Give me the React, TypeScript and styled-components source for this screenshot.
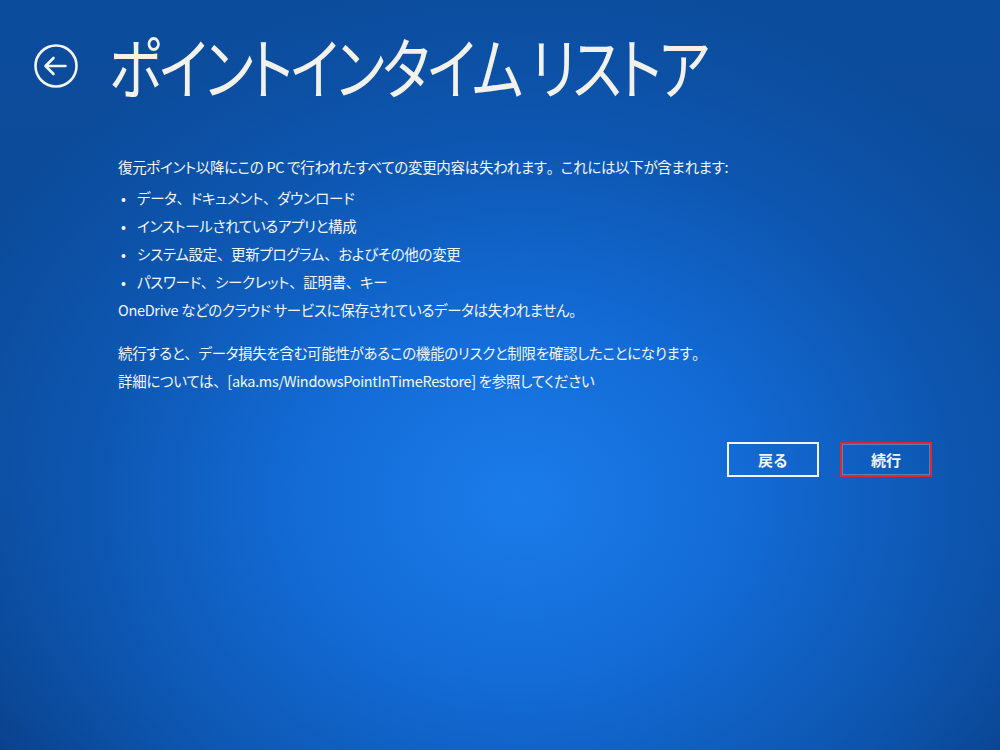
import styled, { createGlobalStyle } from "styled-components";

const GlobalStyle = createGlobalStyle`
  html, body {
    margin: 0;
    padding: 0;
    background: #0a4590;
  }
`;

const Screen = styled.div`
  width: 1000px;
  height: 750px;
  overflow: hidden;
  box-sizing: border-box;
  color: #f4f6f8;
  font-family: "Noto Sans CJK JP", "Noto Sans", sans-serif;
  background:
    radial-gradient(ellipse 620px 520px at 520px 500px, #1b7ce9 0%, #136bd6 35%, #0d56b0 70%, rgba(10, 64, 138, 0) 100%),
    linear-gradient(180deg, #0c4c9c 0%, #0b4a98 60%, #0a3f88 100%);
  padding: 31px 0 0 33px;
`;

const Header = styled.header`
  display: flex;
  align-items: center;
  gap: 30px;
`;

const BackIcon = styled.svg`
  width: 46px;
  height: 46px;
  flex: none;
  margin-top: 3px;
`;

const Title = styled.h1`
  margin: 0;
  font-size: 67px;
  font-weight: 400;
  line-height: 67px;
  letter-spacing: -3px;
  font-feature-settings: "palt";
  color: #f2f1ea;
  white-space: nowrap;
  transform: scaleX(0.815);
  transform-origin: left center;
`;

const Content = styled.main`
  margin: 55px 0 0 85px;
  width: 820px;
  font-size: 14.5px;
  line-height: 28px;
  font-feature-settings: "palt";
  letter-spacing: -0.32px;
`;

// full-width punctuation keeps its trailing space, as in the original UI font
const Punct = styled.span`
  font-feature-settings: normal;
`;

const Line = styled.p<{ $gap?: number }>`
  margin: ${(p) => p.$gap ?? 0}px 0 0;
`;

const Bullets = styled.ul`
  list-style: none;
  margin: 3px 0 0;
  padding: 0;
`;

const Bullet = styled.li`
  padding-left: 3px;

  &::before {
    content: "•";
    display: inline-block;
    width: 16px;
  }
`;

const ButtonRow = styled.div`
  display: flex;
  justify-content: flex-end;
  gap: 21px;
  width: 814px;
  margin-top: 47px;
`;

const Button = styled.button<{ $focused?: boolean }>`
  width: 92px;
  height: 35px;
  box-sizing: border-box;
  background: transparent;
  color: #f4f6f8;
  font-family: "Noto Sans CJK JP", sans-serif;
  font-size: 15px;
  font-weight: 700;
  border: 2px solid ${(p) => (p.$focused ? "#e0262e" : "#f2f4f6")};
  outline: ${(p) => (p.$focused ? "1px solid rgba(150, 170, 200, 0.5)" : "none")};
  outline-offset: -3px;
  padding: 0;
`;

const jp = (text: string) =>
  text.split(/([、。])/).map((part, i) => (i % 2 ? <Punct key={i}>{part}</Punct> : part));

const items = [
  "データ、ドキュメント、ダウンロード",
  "インストールされているアプリと構成",
  "システム設定、更新プログラム、およびその他の変更",
  "パスワード、シークレット、証明書、キー",
];

export default function App() {
  return (
    <Screen>
      <GlobalStyle />
      <Header>
        <BackIcon viewBox="0 0 46 46" fill="none" stroke="#f4f4f0" strokeWidth="2.6">
          <circle cx="23" cy="23" r="20.5" />
          <path d="M12.5 23h20M20.5 15l-8 8 8 8" strokeLinecap="round" strokeLinejoin="round" />
        </BackIcon>
        <Title>ポイントインタイム リストア</Title>
      </Header>
      <Content>
        <Line>
          {jp("復元ポイント以降にこの PC で行われたすべての変更内容は失われます。これには以下が含まれます:")}
        </Line>
        <Bullets>
          {items.map((item) => (
            <Bullet key={item}>{jp(item)}</Bullet>
          ))}
        </Bullets>
        <Line>{jp("OneDrive などのクラウド サービスに保存されているデータは失われません。")}</Line>
        <Line $gap={15}>
          {jp("続行すると、データ損失を含む可能性があるこの機能のリスクと制限を確認したことになります。")}
        </Line>
        <Line>{jp("詳細については、[aka.ms/WindowsPointInTimeRestore] を参照してください")}</Line>
        <ButtonRow>
          <Button>戻る</Button>
          <Button $focused>続行</Button>
        </ButtonRow>
      </Content>
    </Screen>
  );
}
